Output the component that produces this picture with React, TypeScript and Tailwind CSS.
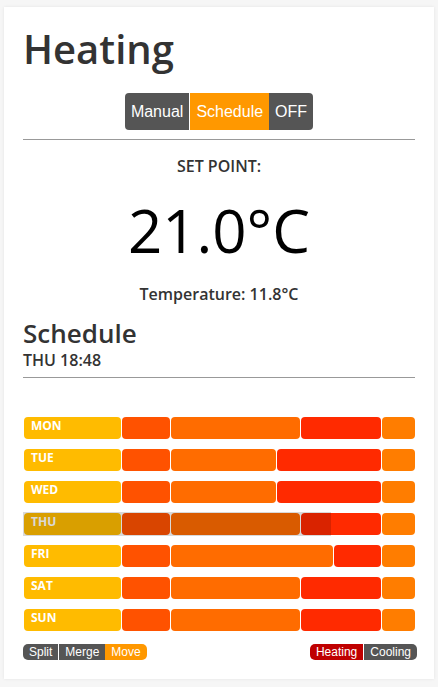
import React from 'react';

type Seg = { h: number; c: string };

const C = {
  label: '#ffbb00',
  morning: '#ff5200',
  day: '#ff6c00',
  evening: '#ff2a00',
  night: '#ff7d00',
};

const week = (a: number, b: number): Seg[] => [
  { h: 6, c: C.label },
  { h: 3, c: C.morning },
  { h: a, c: C.day },
  { h: b, c: C.evening },
  { h: 2, c: C.night },
];

const days: { name: string; segs: Seg[] }[] = [
  { name: 'MON', segs: week(8, 5) },
  { name: 'TUE', segs: week(6.5, 6.5) },
  { name: 'WED', segs: week(6.5, 6.5) },
  { name: 'THU', segs: week(8, 5) },
  { name: 'FRI', segs: week(10, 3) },
  { name: 'SAT', segs: week(8, 5) },
  { name: 'SUN', segs: week(8, 5) },
];

const today = 'THU';
const nowHours = 18 + 48 / 60;

function DayRow({ name, segs }: { name: string; segs: Seg[] }) {
  return (
    <div className="relative flex h-[22px] pl-px">
      {segs.map((s, i) => (
        <div
          key={i}
          className={i < segs.length - 1 ? 'h-full pr-px' : 'h-full'}
          style={{ width: `${(s.h / 24) * 100}%` }}
        >
          <div
            className="h-full rounded-[4px] pl-[7px] pt-px text-[12px] font-bold leading-4 text-white"
            style={{ backgroundColor: s.c }}
          >
            {i === 0 ? name : null}
          </div>
        </div>
      ))}
      {name === today && (
        <div
          className="absolute -top-px -bottom-px left-0 bg-black/15"
          style={{ width: `calc(${(nowHours / 24) * 100}% + 1px)` }}
        />
      )}
    </div>
  );
}

export default function App() {
  return (
    <div className="min-h-[687px] bg-[#f6f6f6] px-[4px] pt-[7px] pb-[8px] font-['Open_Sans',sans-serif]">
      <div className="bg-white px-[19px] pt-[18px] pb-[19px] shadow-[0_0_3px_rgba(0,0,0,0.08)]">
        <h1 className="text-[40px] leading-[48px] font-semibold text-[#333]">Heating</h1>

        <div className="mt-[20px] flex justify-center font-['Liberation_Sans',sans-serif] text-[16px] text-white">
          <div className="flex h-[37px] overflow-hidden rounded-[4px]">
            <div className="flex items-center bg-[#555] px-[6px]">Manual</div>
            <div className="flex items-center border-l border-white bg-[#ff9800] px-[6px]">Schedule</div>
            <div className="flex items-center bg-[#555] px-[6px]">OFF</div>
          </div>
        </div>

        <div className="mt-[9px] h-px bg-[#999]" />

        <div className="mt-[14px] text-center text-[16px] leading-6 font-semibold text-[#333]">SET POINT:</div>
        <div className="mt-[22px] text-center text-[60px] leading-[60px] font-medium text-black">21.0°C</div>
        <div className="mt-[22px] text-center text-[16px] leading-6 font-semibold text-[#333]">
          Temperature: 11.8°C
        </div>

        <h2 className="mt-[11px] text-[26px] leading-[32px] font-semibold text-[#333]">Schedule</h2>
        <div className="mt-px text-[16px] leading-5 font-semibold text-[#333]">THU 18:48</div>

        <div className="mt-[7px] h-px bg-[#999]" />

        <div className="mt-[39px] flex flex-col gap-[10px]">
          {days.map((d) => (
            <DayRow key={d.name} name={d.name} segs={d.segs} />
          ))}
        </div>

        <div className="mt-[13px] flex justify-between font-['Liberation_Sans',sans-serif] text-[12px] leading-4 text-white">
          <div className="flex h-4 overflow-hidden rounded-[5px]">
            <div className="bg-[#555] px-[6px]">Split</div>
            <div className="border-l border-white bg-[#555] px-[6px]">Merge</div>
            <div className="bg-[#ff9800] px-[6px]">Move</div>
          </div>
          <div className="-mr-[2px] flex h-4 overflow-hidden rounded-[5px]">
            <div className="bg-[#bf0000] px-[6px]">Heating</div>
            <div className="border-l border-white bg-[#555] px-[6px]">Cooling</div>
          </div>
        </div>
      </div>
    </div>
  );
}
